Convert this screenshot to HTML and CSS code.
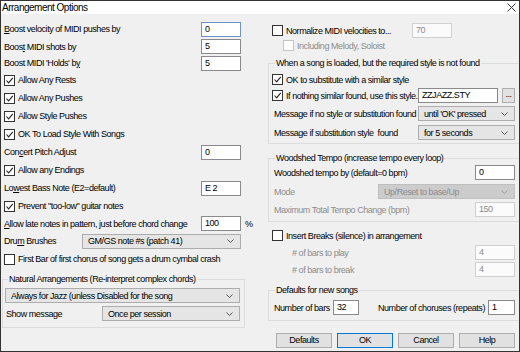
FILE: index.html
```html
<!DOCTYPE html>
<html lang="en">
<head>
    <meta charset="UTF-8">
    <title>Arrangement Options</title>
    <link rel="stylesheet" href="styles.css">
</head>
<body>
<div class="window">
    <div class="titlebar">
        <span class="title">Arrangement Options</span>
        <svg class="close" width="9" height="9" viewBox="0 0 9 9"><path d="M0.5 0.5L8.5 8.5M8.5 0.5L0.5 8.5" stroke="#333" stroke-width="1"/></svg>
    </div>

    <div class="content">
        <!-- left column -->
        <div class="col col-left">
            <div class="row"><span class="label"><u>B</u>oost velocity of MIDI pushes by</span><span class="edit focus">0</span></div>
            <div class="row h17"><span class="label">Boos<u>t</u> MIDI shots by</span><span class="edit">5</span></div>
            <div class="row h16"><span class="label">Boost MIDI 'Holds' b<u>y</u></span><span class="edit">5</span></div>
            <div class="row"><span class="check on"><svg viewBox="0 0 9 9"><path d="M1.5 4.5L3.6 6.8L7.8 1.8" fill="none" stroke="#222" stroke-width="1.1"/></svg></span>Allow Any Rests</div>
            <div class="row"><span class="check on"><svg viewBox="0 0 9 9"><path d="M1.5 4.5L3.6 6.8L7.8 1.8" fill="none" stroke="#222" stroke-width="1.1"/></svg></span>Allow Any Pushes</div>
            <div class="row"><span class="check on"><svg viewBox="0 0 9 9"><path d="M1.5 4.5L3.6 6.8L7.8 1.8" fill="none" stroke="#222" stroke-width="1.1"/></svg></span>Allow Style Pushes</div>
            <div class="row"><span class="check on"><svg viewBox="0 0 9 9"><path d="M1.5 4.5L3.6 6.8L7.8 1.8" fill="none" stroke="#222" stroke-width="1.1"/></svg></span>OK To Load Style With Songs</div>
            <div class="row"><span class="label">Con<u>c</u>ert Pitch Adjust</span><span class="edit">0</span></div>
            <div class="row"><span class="check on"><svg viewBox="0 0 9 9"><path d="M1.5 4.5L3.6 6.8L7.8 1.8" fill="none" stroke="#222" stroke-width="1.1"/></svg></span>Allow any Endings</div>
            <div class="row"><span class="label">Lo<u>w</u>est Bass Note (E2=default)</span><span class="edit">E 2</span></div>
            <div class="row"><span class="check on"><svg viewBox="0 0 9 9"><path d="M1.5 4.5L3.6 6.8L7.8 1.8" fill="none" stroke="#222" stroke-width="1.1"/></svg></span>Prevent "too-low" guitar notes</div>
            <div class="row h17"><span class="label"><u>A</u>llow late notes in pattern, just before chord change</span><span class="edit">100</span><span class="pct">%</span></div>
            <div class="row"><span class="label">Dru<u>m</u> Brushes</span><span class="select w159"><span>GM/GS note #s (patch 41)</span><svg viewBox="0 0 7 4"><path d="M0.5 0.5L3.5 3.5L6.5 0.5" fill="none" stroke="#555"/></svg></span></div>
            <div class="row"><span class="check"></span>First Bar of first chorus of song gets a drum cymbal crash</div>

            <fieldset class="group group-left">
                <legend>Natural Arrangements (Re-interpret complex chords)</legend>
                <div class="select full"><span>Always for Jazz (unless Disabled for the song</span><svg viewBox="0 0 7 4"><path d="M0.5 0.5L3.5 3.5L6.5 0.5" fill="none" stroke="#555"/></svg></div>
                <div class="row tight"><span class="label">Show message</span><span class="select w138"><span>Once per session</span><svg viewBox="0 0 7 4"><path d="M0.5 0.5L3.5 3.5L6.5 0.5" fill="none" stroke="#555"/></svg></span></div>
            </fieldset>
        </div>

        <!-- right column -->
        <div class="col col-right">
            <div class="row tight pad"><span class="check"></span><span class="w126">Normalize MIDI velocities to...</span><span class="edit disabled">70</span></div>
            <div class="row tight sub"><span class="check off"></span><span class="gray">Including Melody, Soloist</span></div>

            <fieldset class="group group-right g1">
                <legend>When a song is loaded, but the required style is not found</legend>
                <div class="row tight mt4"><span class="check on"><svg viewBox="0 0 9 9"><path d="M1.5 4.5L3.6 6.8L7.8 1.8" fill="none" stroke="#222" stroke-width="1.1"/></svg></span>OK to substitute with a similar style</div>
                <div class="row tight mt1"><span class="check on"><svg viewBox="0 0 9 9"><path d="M1.5 4.5L3.6 6.8L7.8 1.8" fill="none" stroke="#222" stroke-width="1.1"/></svg></span><span class="label">If nothing similar found, use this style..</span><span class="edit w80">ZZJAZZ.STY</span><span class="btn-dots">...</span></div>
                <div class="row tight mt3"><span class="label txt">Message if no style or substitution found</span><span class="select w97"><span>until 'OK' pressed</span><svg viewBox="0 0 7 4"><path d="M0.5 0.5L3.5 3.5L6.5 0.5" fill="none" stroke="#555"/></svg></span></div>
                <div class="row tight mt4"><span class="label txt">Message if substitution style&nbsp; found</span><span class="select w97"><span>for 5 seconds</span><svg viewBox="0 0 7 4"><path d="M0.5 0.5L3.5 3.5L6.5 0.5" fill="none" stroke="#555"/></svg></span></div>
            </fieldset>

            <fieldset class="group group-right g2">
                <legend>Woodshed Tempo (increase tempo every loop)</legend>
                <div class="row tight mt2"><span class="label txt">Woodshed tempo by (default=0 bpm)</span><span class="edit">0</span></div>
                <div class="row tight mt4"><span class="label txt gray">Mode</span><span class="select disabled w137"><span>Up/Reset to base/Up</span><svg viewBox="0 0 7 4"><path d="M0.5 0.5L3.5 3.5L6.5 0.5" fill="none" stroke="#999"/></svg></span></div>
                <div class="row tight mt3"><span class="label txt gray">Maximum Total Tempo Change (bpm)</span><span class="edit disabled">150</span></div>
            </fieldset>

            <div class="row tight pad mt6"><span class="check"></span>Insert Breaks (silence) in arrangement</div>
            <div class="row tight indent mt2"><span class="label gray"># of bars to play</span><span class="edit disabled">4</span></div>
            <div class="row tight indent mt2"><span class="label gray"># of bars to break</span><span class="edit disabled">4</span></div>

            <fieldset class="group group-right g3">
                <legend>Defaults for new songs</legend>
                <div class="row tight mt5">
                    <span class="w61 txt">Number of bars</span>
                    <span class="edit w26">32</span>
                    <span class="label choruses">Number of choruses (repeats)</span>
                    <span class="edit w27">1</span>
                </div>
            </fieldset>

            <div class="buttons">
                <span class="btn">Defaults</span>
                <span class="btn default">OK</span>
                <span class="btn">Cancel</span>
                <span class="btn">Help</span>
            </div>
        </div>
    </div>
</div>
</body>
</html>
```

FILE: styles.css
```css
* {
    box-sizing: border-box;
}

body {
    margin: 0;
    font-family: "Liberation Sans", Arial, sans-serif;
    font-size: 9px;
    letter-spacing: -0.45px;
    color: #000;
}

.window {
    width: 520px;
    height: 352px;
    border: 1px solid #333;
    background: #f0f0f0;
    overflow: hidden;
    display: flex;
    flex-direction: column;
}

.titlebar {
    height: 13px;
    background: #fff;
    display: flex;
    align-items: center;
    justify-content: space-between;
    padding: 0 3px 0 1px;
    flex: none;
}

.title {
    font-size: 10px;
    letter-spacing: -0.5px;
}

.content {
    display: flex;
    flex: 1;
}

.col {
    display: flex;
    flex-direction: column;
}

.col-left {
    width: 245px;
    padding: 6px 5px 0 3px;
}

.col-right {
    flex: 1;
    min-width: 0;
    margin-left: 16px;
    padding: 9px 4px 0 6px;
}

.row {
    display: flex;
    align-items: center;
    height: 18px;
    white-space: nowrap;
    flex: none;
}

.row.h17 { height: 17px; }
.row.h16 { height: 16px; }
.row.tight { height: 15px; }

.mt1 { margin-top: 1px; }
.mt2 { margin-top: 2px; }
.mt3 { margin-top: 3px; }
.mt4 { margin-top: 4px; }
.mt5 { margin-top: 5px; }
.mt6 { margin-top: 6px; }

.label {
    flex: 1;
    min-width: 0;
}

.txt {
    padding-left: 2px;
}

.gray {
    color: #8c8c8c;
}

/* text boxes */
.edit {
    flex: none;
    width: 40px;
    height: 15px;
    background: #fff;
    border: 1px solid #8a8a8a;
    padding: 0 3px;
    line-height: 13px;
}

.edit.focus {
    border-color: #6b93c7;
}

.edit.disabled {
    background: #fbfbfb;
    border-color: #cfcfcf;
    color: #8c8c8c;
}

.edit.w80 { width: 80px; }
.edit.w26 { width: 26px; }
.edit.w27 { width: 27px; }

.pct {
    margin-left: 4px;
    margin-right: -12px;
    width: 8px;
}

/* checkboxes */
.check {
    flex: none;
    width: 11px;
    height: 11px;
    border: 1px solid #333;
    background: #fff;
    margin-right: 3px;
    display: flex;
}

.check svg {
    width: 9px;
    height: 9px;
}

.check.off {
    border-color: #c4c4c4;
}

/* drop-down lists */
.select {
    flex: none;
    display: flex;
    align-items: center;
    justify-content: space-between;
    height: 15px;
    border: 1px solid #adadad;
    background: #e5e5e5;
    padding: 0 6px 0 5px;
}

.select svg {
    width: 7px;
    height: 4px;
}

.select.disabled {
    background: #cccccc;
    border-color: #bfbfbf;
    color: #8c8c8c;
}

.select.full { margin-top: 4px; }
.w159 { width: 159px; }
.w138 { width: 138px; }
.w97 { width: 97px; }
.w137 { width: 137px; }
.w126 { width: 126px; }
.w61 { width: 61px; }

.choruses {
    margin-left: 19px;
}

/* group boxes */
.group {
    border: 1px solid #dcdcdc;
    margin: 0;
    min-width: 0;
}

.group legend {
    padding: 0 1px;
    margin-left: 3px;
    line-height: 10px;
    white-space: nowrap;
}

.group-left {
    margin: 6px -4px 0 -2px;
    padding: 0 4px 6px 2px;
}

.group-left .tight {
    margin-top: 3px;
    padding-left: 1px;
}

.group-right {
    margin-right: -10px;
    padding: 0 9px 3px 3px;
}

.g1 { margin-top: 5px; }
.g2 { margin-top: 9px; padding-bottom: 4px; }
.g3 { margin-top: 8px; padding-bottom: 5px; }

.pad { padding-left: 4px; }
.sub { padding-left: 15px; }
.indent { padding-left: 24px; }

.btn-dots {
    flex: none;
    width: 13px;
    height: 15px;
    margin-left: 4px;
    border: 1px solid #adadad;
    background: #e1e1e1;
    text-align: center;
    line-height: 11px;
}

/* bottom buttons */
.buttons {
    display: flex;
    gap: 5px;
    margin-top: 12px;
    padding-left: 8px;
}

.btn {
    width: 56px;
    height: 15px;
    border: 1px solid #adadad;
    background: #e1e1e1;
    text-align: center;
    line-height: 13px;
}

.btn.default {
    border-color: #0078d7;
}
```
